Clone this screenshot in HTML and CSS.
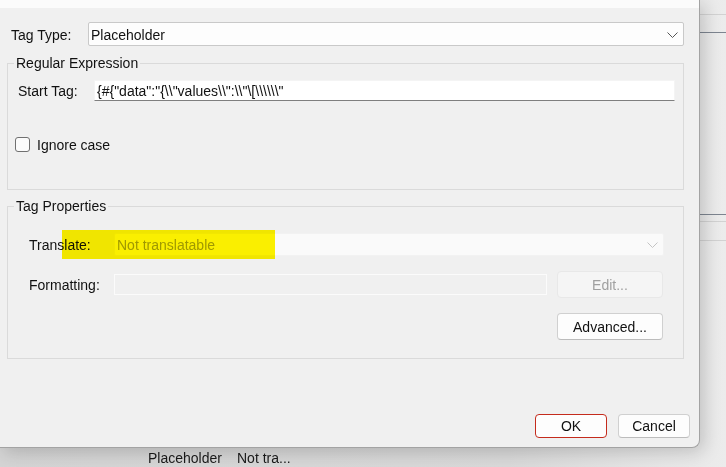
FILE: index.html
```html
<!DOCTYPE html>
<html>
<head>
    <meta charset="UTF-8">
    <title>Tag Settings</title>
    <link rel="stylesheet" href="styles.css">
</head>
<body>
    <div class="backwin">
        <div class="bg-line light" style="margin-top: 14px"></div>
        <div class="bg-line dark" style="margin-top: 17px"></div>
        <div class="bg-line dark" style="margin-top: 181px"></div>
        <div class="bg-line light" style="margin-top: 6px"></div>
        <div class="bg-line light" style="margin-top: 18px"></div>
        <div class="bg-row">
            <span class="bg-cell type">Placeholder</span>
            <span class="bg-cell">Not tra...</span>
        </div>
    </div>

    <div class="dialog">
        <div class="strip"></div>
        <div class="content">
            <div class="row tagtype">
                <label class="lbl">Tag Type:</label>
                <div class="combo">
                    <span>Placeholder</span>
                    <svg class="chev" width="11" height="6" viewBox="0 0 11 6"><polyline points="0.5,0.5 5.5,5.5 10.5,0.5" fill="none" stroke="#555" stroke-width="1"/></svg>
                </div>
            </div>

            <fieldset class="group regex">
                <legend>Regular Expression</legend>
                <div class="group-body">
                    <div class="row starttag">
                        <label class="lbl">Start Tag:</label>
                        <div class="textbox">{#{"data":"{\\"values\\":\\"\[\\\\\\"</div>
                    </div>
                    <label class="check">
                        <span class="box"></span>
                        <span>Ignore case</span>
                    </label>
                </div>
            </fieldset>

            <fieldset class="group props">
                <legend>Tag Properties</legend>
                <div class="group-body">
                    <div class="row translate">
                        <label class="lbl">Translate:</label>
                        <div class="combo disabled">
                            <span>Not translatable</span>
                            <svg class="chev" width="11" height="6" viewBox="0 0 11 6"><polyline points="0.5,0.5 5.5,5.5 10.5,0.5" fill="none" stroke="#c4c4c4" stroke-width="1"/></svg>
                        </div>
                        <div class="marker"></div>
                    </div>
                    <div class="row formatting">
                        <label class="lbl">Formatting:</label>
                        <div class="textbox disabled"></div>
                        <button class="btn disabled">Edit...</button>
                    </div>
                    <div class="row advanced">
                        <button class="btn">Advanced...</button>
                    </div>
                </div>
            </fieldset>

            <div class="actions">
                <button class="btn default">OK</button>
                <button class="btn">Cancel</button>
            </div>
        </div>
    </div>
</body>
</html>
```

FILE: styles.css
```css
* {
    margin: 0;
    padding: 0;
    box-sizing: border-box;
}

body {
    width: 726px;
    height: 467px;
    overflow: hidden;
    font-family: "Liberation Sans", Arial, sans-serif;
    font-size: 14px;
    color: #111;
    background: linear-gradient(90deg, #d6d6d6 0%, #dcdcdc 60%, #e9e9e9 100%);
}

/* window behind the dialog */
.backwin {
    display: flex;
    flex-direction: column;
    height: 467px;
    background: linear-gradient(90deg, #d4d4d4 0%, #d9d9d9 70%, #ececec 100%);
}

.bg-line {
    height: 1px;
}
.bg-line.light { background: #d2d2d2; }
.bg-line.dark { background: #7d8590; }

.bg-row {
    display: flex;
    margin-top: auto;
    height: 17px;
    padding-left: 148px;
    font-size: 14px;
    line-height: 16px;
    color: #1a1a1a;
}
.bg-cell.type {
    width: 89px;
}

/* dialog */
.dialog {
    position: absolute;
    top: 0;
    left: 0;
    width: 700px;
    height: 448px;
    background: #f0f0f0;
    border-right: 1px solid #a3a3a3;
    border-bottom: 1px solid #a3a3a3;
    border-bottom-right-radius: 8px;
    box-shadow: 4px 4px 18px rgba(0, 0, 0, 0.18);
    overflow: hidden;
}

.strip {
    height: 8px;
    background: #fbfbfb;
}

.content {
    padding: 14px 15px 0 11px;
}

.row {
    display: flex;
    align-items: center;
}

.lbl {
    flex: none;
    white-space: nowrap;
}

.combo {
    flex: 1;
    display: flex;
    align-items: center;
    justify-content: space-between;
    height: 24px;
    padding: 1px 5px 0 2px;
    background: #fdfdfd;
    border: 1px solid #c9c9c9;
    border-radius: 2px;
}
.combo.disabled {
    height: 23px;
    background: #fafafa;
    border-color: #f2f2f2;
    color: #a0a0a0;
}

.tagtype .lbl {
    width: 77px;
    padding-top: 1px;
}

.textbox {
    flex: 1;
    height: 21px;
    padding: 1px 2px 0;
    line-height: 18px;
    background: #fff;
    border: 1px solid #f4f4f4;
    border-bottom: 1px solid #7f7f7f;
    white-space: nowrap;
    overflow: hidden;
}
.textbox.disabled {
    background: #f0f0f0;
    border: 1px solid #fbfbfb;
}

/* group boxes */
.group {
    border: 1px solid #dadada;
    margin: 9px 0 0 -4px;
}
.group legend {
    margin-left: 6px;
    padding: 0 2px;
    line-height: 16px;
}

.regex .group-body {
    padding: 9px 8px 37px 7px;
}
.starttag {
    padding-left: 3px;
}
.starttag .lbl {
    width: 76px;
}

.check {
    display: flex;
    align-items: center;
    gap: 7px;
    margin-top: 36px;
    height: 15px;
}
.check .box {
    width: 15px;
    height: 15px;
    border: 1px solid #707070;
    border-radius: 3px;
    background: #fbfbfb;
}

.props {
    margin-top: 8px;
}
.props .group-body {
    padding: 19px 19px 18px 21px;
}
.translate {
    position: relative;
}
.translate .lbl,
.formatting .lbl {
    width: 85px;
}

/* yellow highlighter over the Translate row */
.marker {
    position: absolute;
    left: 33px;
    top: -3px;
    width: 213px;
    height: 29px;
    background: #fff400;
    mix-blend-mode: multiply;
}

.formatting {
    margin-top: 15px;
    gap: 10px;
}
.formatting .lbl {
    margin-right: -10px;
}

.advanced {
    justify-content: flex-end;
    margin-top: 15px;
    padding-right: 1px;
}

.btn {
    flex: none;
    width: 106px;
    height: 27px;
    font-family: inherit;
    font-size: 14px;
    color: #111;
    background: #fdfdfd;
    border: 1px solid #d0d0d0;
    border-bottom-color: #bcbcbc;
    border-radius: 4px;
}
.btn.disabled {
    color: #a0a0a0;
    background: #f5f5f5;
    border-color: #e8e8e8;
}

.formatting .btn {
    margin-right: 1px;
}

.actions {
    display: flex;
    justify-content: flex-end;
    gap: 11px;
    margin-top: 55px;
    margin-right: -6px;
}
.actions .btn {
    width: 72px;
    height: 24px;
}
.actions .btn.default {
    border: 1px solid #c42b1c;
}
```
